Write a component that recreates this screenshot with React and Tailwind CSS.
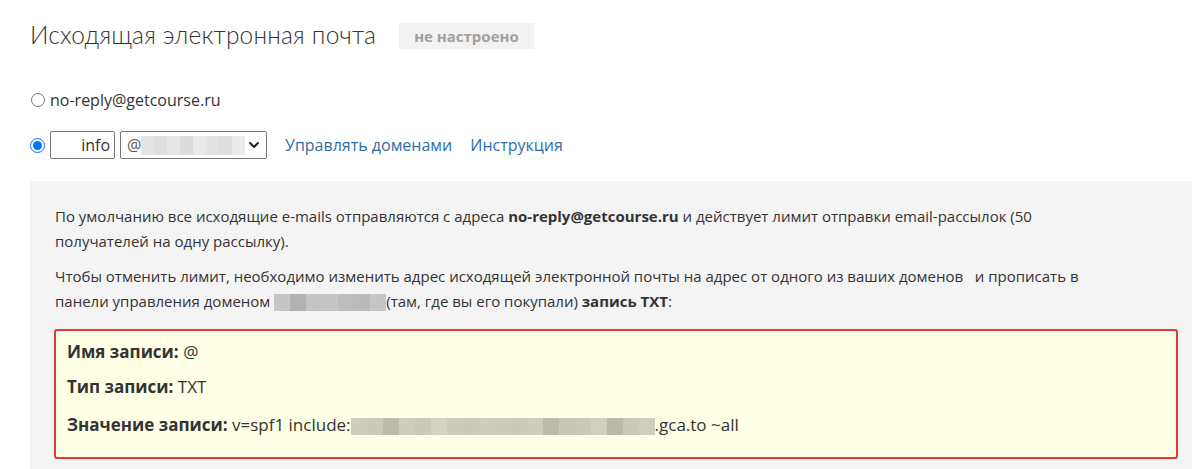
import { ChevronDown } from 'lucide-react';

const BODY = { fontFamily: '"Open Sans", "Noto Sans", sans-serif' };
const TITLE = { fontFamily: '"Lato", "Open Sans", sans-serif' };
const BOX = { fontFamily: '"Open Sans", "Noto Sans", sans-serif' };

function Blur({ colors, h = 'h-[17px]', w = 'w-[16px]' }) {
  return (
    <span className="inline-flex align-middle">
      {colors.map((c, i) => (
        <span key={i} className={`${h} ${w} inline-block`} style={{ background: c }} />
      ))}
    </span>
  );
}

export default function App() {
  return (
    <div className="w-[1192px] h-[469px] overflow-hidden bg-white text-[#333]" style={BODY}>
      <div className="pl-[30px]">

        <div className="flex items-center pt-[17px] h-[54px]">
          <h2 className="text-[24.5px] font-light tracking-[0.2px] text-[#333]" style={TITLE}>Исходящая электронная почта</h2>
          <span className="ml-[23px] bg-[#f2f2f2] text-[#a0a0a0] font-bold text-[15px] px-[15px] h-[26px] leading-[26px]">не настроено</span>
        </div>

        <label className="flex items-center mt-[34px] gap-[5px] text-[16px] text-[#333]">
          <input type="radio" name="from" className="w-[14px] h-[14px] m-0 ml-[1px]" readOnly />
          no-reply@getcourse.ru
        </label>

        <div className="flex items-center mt-[19px] h-[28px]">
          <input type="radio" name="from" checked readOnly className="w-[15px] h-[15px] m-0 accent-[#0075ff]" />
          <div className="ml-[5px] w-[65px] h-[28px] border border-[#767676] rounded-[2px] text-right pr-[4px] text-[16px] leading-[26px]">info</div>
          <div className="ml-[5px] w-[147px] h-[28px] border border-[#767676] rounded-[2px] flex items-center pl-[6px] pr-[4px] text-[16px] text-[#555]">
            <span>@</span>
            <Blur h="h-[19px]" w="w-[13px]" colors={['#e4e4e4', '#dedede', '#e6e6e6', '#dcdcdc', '#e8e8e8', '#e2e2e2', '#dedede', '#eaeaea']} />
            <ChevronDown className="ml-auto w-[16px] h-[16px] text-[#222]" strokeWidth={3} />
          </div>
          <a className="ml-[18px] text-[16px] text-[#2f6fa8]">Управлять доменами</a>
          <a className="ml-[18px] text-[16px] text-[#2f6fa8]">Инструкция</a>
        </div>

        <div className="mt-[22px] w-[1173px] bg-[#f4f4f4] pl-[25px] pr-[25px] pt-[23px] pb-[12px] text-[15px] leading-[25px] text-[#333]">
          <p>
            По умолчанию все исходящие e-mails отправляются с адреса <b>no-reply@getcourse.ru</b> и действует лимит отправки email-рассылок (50<br />
            получателей на одну рассылку).
          </p>
          <p className="mt-[10px]">
            Чтобы отменить лимит, необходимо изменить адрес исходящей электронной почты на адрес от одного из ваших доменов &nbsp; и прописать в<br />
            панели управления доменом <Blur colors={['#c6c6c6', '#b2b2b2', '#c4c4c4', '#c6c6c6', '#bdbdbd', '#bbbbbb', '#c6c6c6']} />(там, где вы его покупали) <b>запись TXT</b>:
          </p>

          <div className="mt-[15px] -ml-[1px] border-2 border-[#e53935] rounded-[3px] bg-[#ffffe6] pl-[11px] pt-[10px] pb-[21px] text-[17px] leading-[22px] text-[#333]" style={BOX}>
            <p><b>Имя записи:</b> @</p>
            <p className="mt-[13px]"><b>Тип записи:</b> TXT</p>
            <p className="mt-[16px]">
              <b>Значение записи:</b> v=spf1 include:<Blur w="w-[16px]" colors={['#cdcdbd', '#cacabb', '#bbbcae', '#cdcdbd', '#c9c9ba', '#d3d3c4', '#cccbbc', '#cacabb', '#cdcdbd', '#cbcbbc', '#c9caba', '#cdcdbe', '#bbbcae', '#c8c8b9', '#c9c9ba', '#d0d0c1', '#b9baac', '#c9c9ba', '#cecdbe']} />.gca.to ~all
            </p>
          </div>
        </div>

      </div>
    </div>
  );
}
